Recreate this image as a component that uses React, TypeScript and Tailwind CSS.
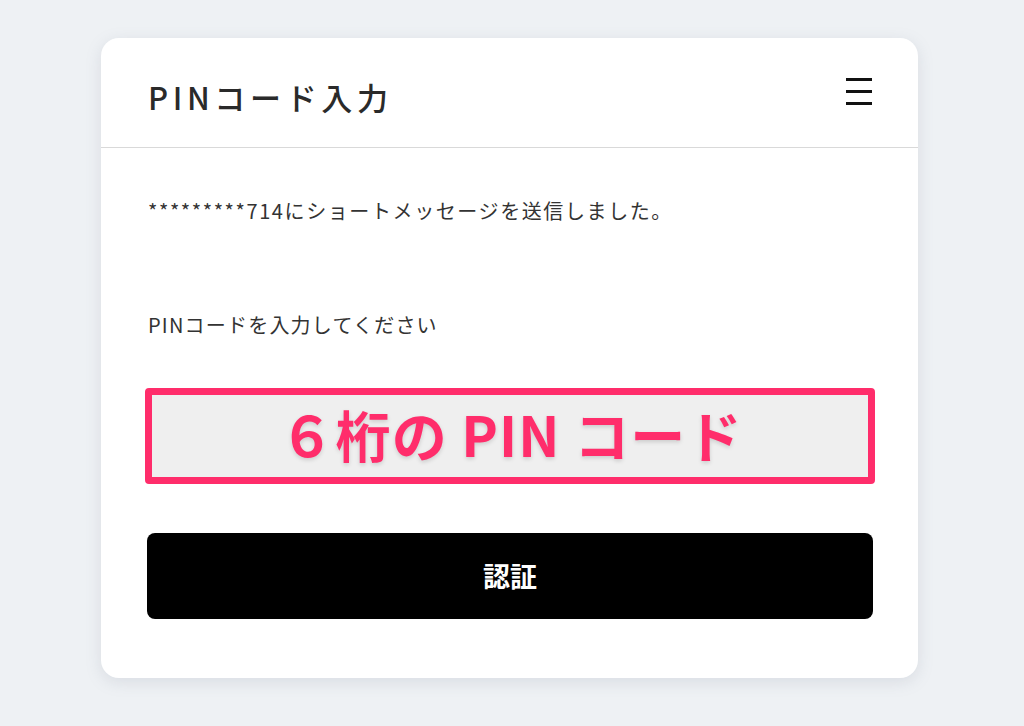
export default function App() {
  return (
    <div
      className="w-[1024px] h-[726px] bg-[#eef1f4] pt-[38px] pl-[101px]"
      style={{ fontFamily: '"Noto Sans CJK JP", "Noto Sans", sans-serif' }}
    >
      <div className="w-[817px] h-[640px] bg-white rounded-[18px] shadow-[0_4px_16px_rgba(120,130,150,0.18)] overflow-hidden">
        <header className="h-[110px] flex items-center justify-between pl-[47px] pr-[46px] border-b border-[#d9d9d9]">
          <h1 className="text-[31px] font-medium tracking-[0.15em] text-[#2a2a2a] mt-[10px]">PINコード入力</h1>
          <div className="flex flex-col gap-[9px] w-[26px] -mt-[2px]">
            <span className="block h-[3px] bg-[#111]" />
            <span className="block h-[3px] bg-[#111]" />
            <span className="block h-[3px] bg-[#111]" />
          </div>
        </header>

        <div className="px-[45px]">
          <p className="mt-[49px] text-[20px] leading-[28px] tracking-[0.08em] text-[#333] pl-[2px]">*********714にショートメッセージを送信しました。</p>
          <p className="mt-[86px] text-[20px] leading-[28px] tracking-[0.06em] text-[#333] pl-[2px]">PINコードを入力してください</p>

          <div className="mt-[49px] -ml-[1px] w-[730px] h-[96px] border-[7px] border-[#ff2d6b] rounded-[4px] bg-[#efefef] flex items-center justify-center">
            <span className="text-[55px] font-bold text-[#ff2d6b] tracking-[0.02em] [text-shadow:0_2px_4px_rgba(0,0,0,0.15)] -mt-[6px] ml-[2px]">
              ６桁の PIN コード
            </span>
          </div>

          <button className="mt-[49px] ml-[1px] w-[726px] h-[86px] bg-black rounded-[8px] text-white text-[27px] font-bold flex items-center justify-center">
            認証
          </button>
        </div>
      </div>
    </div>
  )
}
